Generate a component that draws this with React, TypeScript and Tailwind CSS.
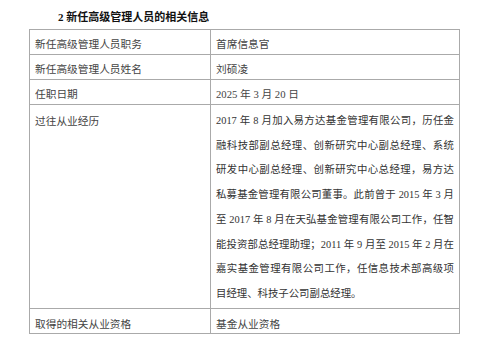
import React from 'react';

const font = {
  fontFamily: '"Liberation Serif", "Noto Sans CJK SC", serif',
};

const rows: { label: string; value: string }[] = [
  { label: '新任高级管理人员职务', value: '首席信息官' },
  { label: '新任高级管理人员姓名', value: '刘硕凌' },
  { label: '任职日期', value: '2025 年 3 月 20 日' },
];

// Each line of the résumé paragraph, broken as in the document
const history = [
  '2017 年 8 月加入易方达基金管理有限公司，历任金',
  '融科技部副总经理、创新研究中心副总经理、系统',
  '研发中心副总经理、创新研究中心总经理，易方达',
  '私募基金管理有限公司董事。此前曾于 2015 年 3 月',
  '至 2017 年 8 月在天弘基金管理有限公司工作，任智',
  '能投资部总经理助理；2011 年 9 月至 2015 年 2 月在',
  '嘉实基金管理有限公司工作，任信息技术部高级项',
  '目经理、科技子公司副总经理。',
];

const App: React.FC = () => {
  return (
    <div className="w-[500px] h-[356px] bg-white overflow-hidden" style={font}>
      {/* Section title */}
      <h2 className="pl-[58px] pt-[10px] text-[11px] leading-[14px] font-bold text-[#111]">
        2 新任高级管理人员的相关信息
      </h2>

      {/* Info table */}
      <div className="ml-[29px] mt-[5px] w-[431px] border border-[#aaaaaa] text-[10.7px] text-[#444]">
        {rows.map((row) => (
          <div key={row.label} className="grid grid-cols-[181px_1fr] border-b border-[#aaaaaa]">
            <div className="h-[24px] pl-[5px] pt-[6px] leading-[16px] border-r border-[#aaaaaa]">
              {row.label}
            </div>
            <div className="h-[24px] pl-[5px] pt-[6px] leading-[16px]">{row.value}</div>
          </div>
        ))}

        <div className="grid grid-cols-[181px_1fr] border-b border-[#aaaaaa]">
          <div className="pl-[5px] pt-[4px] leading-[24.7px] border-r border-[#aaaaaa]">过往从业经历</div>
          <div className="pl-[5px] pr-[5px] pt-[4px] pb-[1px] text-[10.4px] text-[#333]">
            {history.map((line, i) => (
              <div
                key={i}
                className={`whitespace-nowrap leading-[24.7px] ${i < history.length - 1 ? 'text-justify [text-align-last:justify]' : ''}`}
              >
                {line}
              </div>
            ))}
          </div>
        </div>

        <div className="grid grid-cols-[181px_1fr]">
          <div className="h-[24px] pl-[5px] pt-[7px] leading-[16px] border-r border-[#aaaaaa]">取得的相关从业资格</div>
          <div className="h-[24px] pl-[5px] pt-[7px] leading-[16px]">基金从业资格</div>
        </div>
      </div>
    </div>
  );
};

export default App;
